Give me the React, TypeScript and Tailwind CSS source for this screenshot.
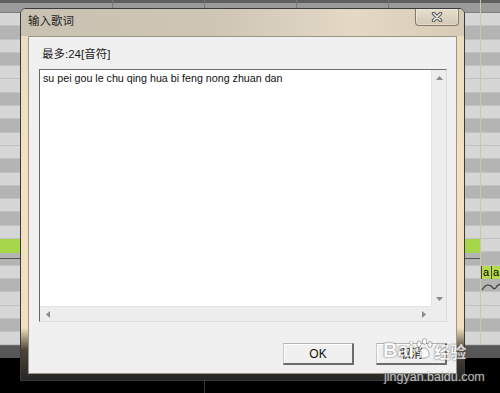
import React from "react";

const P = ["D", "L", "D", "L", "L", "D", "L", "D", "L", "D", "L", "L"];

function UpArrow() {
  return (
    <svg width="7" height="4" viewBox="0 0 7 4"><path d="M0 4 L3.5 0 L7 4 Z" fill="#8a8a8a" /></svg>
  );
}
function DownArrow() {
  return (
    <svg width="7" height="4" viewBox="0 0 7 4"><path d="M0 0 L3.5 4 L7 0 Z" fill="#8a8a8a" /></svg>
  );
}
function LeftArrow() {
  return (
    <svg width="4" height="7" viewBox="0 0 4 7"><path d="M4 0 L0 3.5 L4 7 Z" fill="#8a8a8a" /></svg>
  );
}
function RightArrow() {
  return (
    <svg width="4" height="7" viewBox="0 0 4 7"><path d="M0 0 L4 3.5 L0 7 Z" fill="#8a8a8a" /></svg>
  );
}

export default function App() {
  const rows = Array.from({ length: 25 }, (_, k) => P[(((k - 6) % 12) + 12) % 12]);
  return (
    <div className="relative w-[500px] h-[393px] overflow-hidden bg-black font-['Liberation_Sans','Noto_Sans_CJK_SC',sans-serif]">
      {/* background piano roll */}
      <div className="flex flex-col w-full">
        <div className="h-[3px] bg-[#5e5e5e]" />
        <div className="h-[10px] bg-[#9a9a9a] border-b border-[#7e7e7e]" />
        {rows.map((r, i) => (
          <div
            key={i}
            className={`h-[13.3px] border-b border-[#c2c2c2] ${r === "L" ? "bg-[#d6d6d6]" : "bg-[#b4b4b4]"}`}
          />
        ))}
        <div className="h-[12.5px] bg-[#575757] border-t border-[#6a6a6a]" />
        <div className="h-[35px] bg-black" />
      </div>

      {/* canvas items of the piano roll */}
      <div className="absolute left-[112px] top-0 w-px h-[13px] bg-[#777]" />
      <div className="absolute left-[204px] top-0 w-px h-[13px] bg-[#777]" />
      <div className="absolute left-[296px] top-0 w-px h-[13px] bg-[#777]" />
      <div className="absolute left-[388px] top-0 w-px h-[13px] bg-[#777]" />
      <div className="absolute left-[480px] top-0 w-px h-[345px] bg-[#c9c9a6]" />
      <div className="absolute left-[204px] top-[358px] w-px h-[35px] bg-[#3a3a3a]" />
      <div className="absolute left-0 top-[239px] w-[480px] h-[13.5px] bg-[#a8d64b]" />
      <div className="absolute left-0 top-[258px] w-[480px] h-px bg-[#55554a]" />
      <div className="absolute left-[481px] top-[266px] w-[10px] h-[13px] bg-[#b6da4e] border-l border-[#444] text-[11px] leading-[12px] text-black pl-[1px]">a</div>
      <div className="absolute left-[491px] top-[266px] w-[10px] h-[13px] bg-[#b6da4e] border-l border-[#444] text-[11px] leading-[12px] text-black pl-[1px]">a</div>
      <svg className="absolute left-[481px] top-[280px]" width="19" height="12" viewBox="0 0 19 12">
        <path d="M1 10 Q4 5 7 5 Q10 5 12 8 Q14 10 16 6 L19 4" stroke="#3a3a3a" strokeWidth="1.2" fill="none" />
      </svg>

      {/* dialog */}
      <div className="absolute left-[20px] top-[8px] w-[445px] h-[373px] flex flex-col border border-[#3a3a3a] rounded-t-[6px] bg-[linear-gradient(180deg,#eadcc2_0%,#f3e1bf_40%,#f2dfbd_86%,#4a4438_92%,#262626_100%)]">
        <div className="relative h-[27px] flex items-center pl-[7px] rounded-t-[5px] bg-[linear-gradient(90deg,#c9c1b1_0%,#cfc6b5_45%,#e3d9c5_75%,#d6cbb7_100%)]">
          <span className="text-[11.5px] text-[#222] leading-none -mt-[1px]">输入歌词</span>
          <div className="absolute right-[5px] top-0 w-[44px] h-[17px] border border-t-0 border-[#857a68] rounded-b-[4px] bg-[linear-gradient(180deg,#e6dece,#d3c8b4)] shadow-[inset_0_0_0_1px_rgba(255,255,255,0.35)] flex items-center justify-center">
            <svg width="12" height="10" viewBox="0 0 12 10">
              <path d="M2.5 1.5 L9.5 8.5 M9.5 1.5 L2.5 8.5" stroke="#4a4a4a" strokeWidth="3.4" strokeLinecap="round" />
              <path d="M2.5 1.5 L9.5 8.5 M9.5 1.5 L2.5 8.5" stroke="#f4f4f4" strokeWidth="1.6" strokeLinecap="round" />
            </svg>
          </div>
        </div>
        <div className="flex-1 flex px-[7px] pb-[6px]">
          <div className="flex-1 flex flex-col bg-[#f0f0f0] border border-[#9c968a] pl-[10px] pr-[9px] pt-[10px]">
            <div className="h-[16px] pl-[3px] flex items-center text-[11.5px] text-[#1a1a1a]">最多:24[音符]</div>
            <div className="mt-[6px] h-[253px] border-t border-l border-t-[#6e6e6e] border-l-[#666] border-r border-b border-r-[#dcdcdc] border-b-[#dcdcdc] grid grid-cols-[1fr_15px] grid-rows-[1fr_15px]">
              <div className="bg-white pl-[3px] pt-[2px] text-[10.7px] leading-[13px] text-[#111]">
                su pei gou le chu qing hua bi feng nong zhuan dan
              </div>
              <div className="bg-[#ededed] border-l border-[#e4e4e4] flex flex-col justify-between">
                <div className="h-[15px] flex items-center justify-center"><UpArrow /></div>
                <div className="h-[15px] flex items-center justify-center"><DownArrow /></div>
              </div>
              <div className="bg-[#ededed] border-t border-[#e4e4e4] flex justify-between">
                <div className="w-[15px] flex items-center justify-center"><LeftArrow /></div>
                <div className="w-[15px] flex items-center justify-center"><RightArrow /></div>
              </div>
              <div className="bg-[#ededed]" />
            </div>
            <div className="mt-[21px] flex justify-end gap-[22px]">
              <div className="w-[71px] h-[22px] flex items-center justify-center bg-[#f0f0f0] border-t border-l border-t-[#b4b4b4] border-l-[#c8c8c8] border-r-2 border-b-2 border-r-[#6c6c6c] border-b-[#6c6c6c] shadow-[inset_1px_1px_0_#ffffff] text-[12px] text-[#111]">
                OK
              </div>
              <div className="w-[71px] h-[22px] flex items-center justify-center bg-[#f0f0f0] border-t border-l border-t-[#b4b4b4] border-l-[#c8c8c8] border-r-2 border-b-2 border-r-[#6c6c6c] border-b-[#6c6c6c] shadow-[inset_1px_1px_0_#ffffff] text-[12px] text-[#111]">
                取消
              </div>
            </div>
          </div>
        </div>
      </div>

      {/* watermark */}
      <div className="absolute left-[383px] top-[338px] flex items-end opacity-75">
        <span className="text-[20px] leading-[22px] font-bold text-white [text-shadow:0_0_2px_#555,0_0_1px_#555]">Bai</span>
        <svg width="20" height="22" viewBox="0 0 20 22" className="mb-[1px]">
          <g fill="#ffffff" stroke="#777" strokeWidth="0.8">
            <ellipse cx="5" cy="6" rx="2.2" ry="3" />
            <ellipse cx="10.5" cy="3.5" rx="2.2" ry="3" />
            <ellipse cx="16" cy="6.5" rx="2.2" ry="3" />
            <ellipse cx="3" cy="12" rx="2" ry="2.6" />
            <path d="M10 10 C6 10 4 17 6 19 C8 21 12 20 14 19 C17 17 14 10 10 10 Z" />
          </g>
        </svg>
        <span className="text-[16px] leading-[20px] font-bold text-white [text-shadow:0_0_2px_#555,0_0_1px_#555] font-['Noto_Sans_CJK_SC',sans-serif]">经验</span>
      </div>
      <div className="absolute left-[384px] top-[370px] text-[12.5px] leading-[14px] text-white opacity-70 [text-shadow:0_0_2px_#444]">
        jingyan.baidu.com
      </div>
    </div>
  );
}
